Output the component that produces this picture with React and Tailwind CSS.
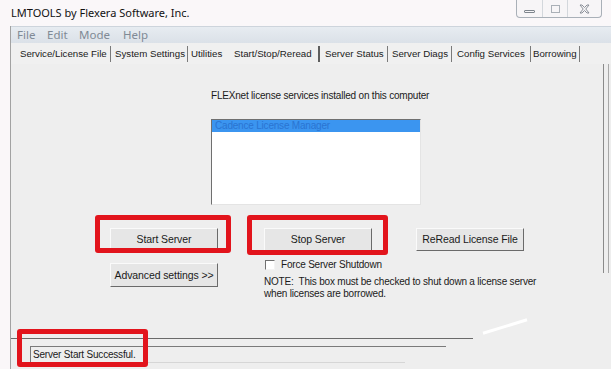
import React from "react";

const tabs = [
  { label: "Service/License File", w: "w-[96px]", pl: "pl-[5px]", sep: true },
  { label: "System Settings", w: "w-[77px]", pl: "pl-[4px]", sep: true },
  { label: "Utilities", w: "w-[41px]", pl: "pl-[3px]", sep: false },
  { label: "Start/Stop/Reread", w: "w-[91px]", pl: "pl-[5px]", active: true },
  { label: "Server Status", w: "w-[68px]", pl: "pl-[5px]", sep: true },
  { label: "Server Diags", w: "w-[64px]", pl: "pl-[4px]", sep: true },
  { label: "Config Services", w: "w-[79px]", pl: "pl-[5px]", sep: true },
  { label: "Borrowing", w: "w-[49px]", pl: "pl-[2px]", sep: true },
];

const WinButton = ({ children, className = "" }) => (
  <button
    className={`h-[23px] w-[108px] bg-[#e6e6e6] border border-t-[#fafafa] border-l-[#fafafa] border-r-[#6a6a6a] border-b-[#6a6a6a] text-[10.5px] tracking-[-0.1px] text-[#1a1a1a] leading-none ${className}`}
  >
    {children}
  </button>
);

const RedFrame = ({ className }) => (
  <div className={`absolute border-[5px] border-[#e2141c] rounded-[3px] pointer-events-none ${className}`} />
);

const App = () => {
  return (
    <div
      className="relative w-[611px] h-[369px] overflow-hidden bg-[#faf7f9] flex flex-col text-[#1a1a1a]"
      style={{ fontFamily: '"Liberation Sans", Arial, sans-serif' }}
    >
      {/* Title bar */}
      <div className="h-[26px] shrink-0 flex items-start">
        <div className="pl-[11px] pt-[5px] text-[11px] text-[#111]" style={{ fontFamily: '"Noto Sans", sans-serif' }}>
          LMTOOLS by Flexera Software, Inc.
        </div>
        <div className="ml-auto mr-[9px] flex h-[18px] border border-t-0 border-[#a9b0b8] rounded-b-[4px] bg-[#f7f5f7]">
          <div className="w-[26px] flex items-center justify-center border-r border-[#d3d7dc]">
            <div className="mt-[6px] w-[11px] h-[3px] border border-[#7e858d] rounded-[1px]" />
          </div>
          <div className="w-[25px] flex items-center justify-center border-r border-[#d3d7dc]">
            <div className="w-[9px] h-[8px] border border-[#aab0b7]" />
          </div>
          <div className="w-[33px] flex items-center justify-center">
            <svg width="11" height="10" viewBox="0 0 11 10">
              <path d="M1 1 L3 1 L5.5 3.5 L8 1 L10 1 L6.8 5 L10 9 L8 9 L5.5 6.5 L3 9 L1 9 L4.2 5 Z" fill="none" stroke="#7e858d" strokeWidth="0.9" />
            </svg>
          </div>
        </div>
      </div>

      {/* Window body */}
      <div className="flex-1 flex flex-col ml-[10px] border-l border-[#a2a2a2] bg-[#eeeeee]">
        {/* Menu bar */}
        <div
          className="h-[17px] shrink-0 flex items-center pl-[6px] border-t border-[#cdd4dc] bg-gradient-to-b from-[#e7ecf1] to-[#dbe1e8] text-[11.5px] text-[#808a95]"
          style={{ fontFamily: '"Noto Sans", sans-serif' }}
        >
          <span className="w-[30px]">File</span>
          <span className="w-[32px]">Edit</span>
          <span className="w-[44px]">Mode</span>
          <span>Help</span>
        </div>

        {/* Tabs */}
        <div className="h-[21px] shrink-0 flex items-start pt-[3px] pl-[4px] bg-[#f0f0f0] text-[9.7px]">
          {tabs.map((t) => (
            <div
              key={t.label}
              className={`${t.w} ${t.pl} h-[16px] leading-[16px] whitespace-nowrap ${
                t.active ? "border-r-2 border-[#5e5e5e]" : t.sep ? "border-r border-[#7a7a7a]" : ""
              }`}
            >
              {t.label}
            </div>
          ))}
        </div>

        {/* Panel */}
        <div className="h-[274px] shrink-0 flex">
          <div className="w-[592px] flex flex-col text-[10px] tracking-[-0.2px]">
            <div className="mt-[26px] ml-[200px] leading-[12px]">FLEXnet license services installed on this computer</div>

            <div className="mt-[17px] ml-[200px] w-[210px] h-[86px] bg-white border border-t-[#6f6f6f] border-l-[#6f6f6f] border-r-[#e4e4e4] border-b-[#e4e4e4]">
              <div className="h-[12px] leading-[12px] bg-[#3b95f0] text-[#2a74d2] pl-[3px]">Cadence License Manager</div>
            </div>

            <div className="mt-[23px] flex items-start">
              <div className="ml-[99px] w-[108px] flex flex-col">
                <div className="relative">
                  <WinButton>Start Server</WinButton>
                  <RedFrame className="-left-[15px] -right-[13px] -top-[13px] -bottom-[2px]" />
                </div>
                <WinButton className="mt-[12px] h-[24px]">Advanced settings &gt;&gt;</WinButton>
              </div>

              <div className="ml-[46px] w-[108px] flex flex-col">
                <div className="relative w-[108px]">
                  <WinButton>Stop Server</WinButton>
                  <RedFrame className="-left-[17px] -right-[16px] -top-[13px] -bottom-[4px]" />
                </div>
                <div className="mt-[8px] flex items-center h-[12px] pl-[1px] whitespace-nowrap">
                  <div className="shrink-0 w-[10px] h-[10px] bg-white border border-t-[#707070] border-l-[#707070] border-r-[#f4f4f4] border-b-[#f4f4f4]" />
                  <span className="ml-[6px] leading-[12px]">Force Server Shutdown</span>
                </div>
                <div className="mt-[5px] leading-[11.5px] whitespace-nowrap">
                  NOTE:&nbsp; This box must be checked to shut down a license server
                  <br />
                  when licenses are borrowed.
                </div>
              </div>

              <div className="ml-[44px]">
                <WinButton>ReRead License File</WinButton>
              </div>
            </div>
          </div>

          <div className="w-[8px]">
            <div className="h-[209px] w-[6px] border-l border-r border-l-[#8a8a8a] border-r-[#a8a8a8]" />
          </div>
        </div>

        {/* Separator line */}
        <div className="h-[1px] w-[462px] bg-[#6a6a6a]" />

        {/* Status bar */}
        <div className="mt-[7px] ml-[19px] w-[416px] relative">
          <div className="h-[16px] border-t border-l border-[#7a7a7a] text-[10px] tracking-[-0.2px] leading-[15px] pl-[2px]">
            Server Start Successful.
          </div>
          <div className="h-[1px] w-[375px] bg-[#d6d6d6]" />
          <RedFrame className="-left-[13px] w-[131px] -top-[17px] h-[38px]" />
        </div>
      </div>

      {/* glare streak */}
      <div className="absolute left-[482px] top-[325px] w-[46px] h-[3px] bg-white -rotate-[17deg]" />
    </div>
  );
};

export default App;
